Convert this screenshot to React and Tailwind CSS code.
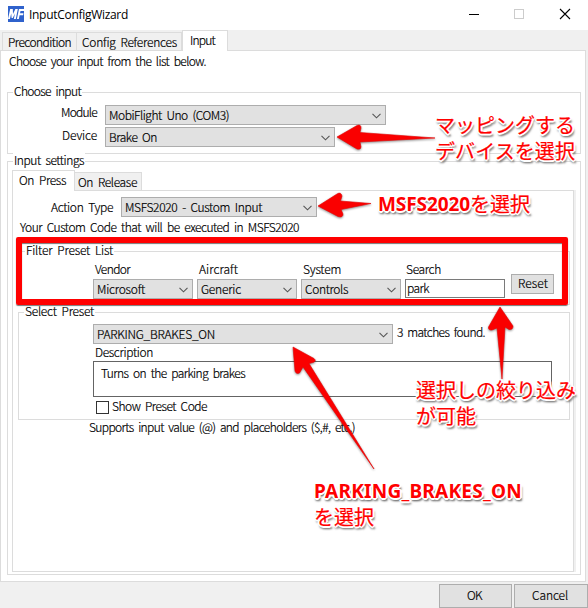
import { useLayoutEffect, useRef } from "react";

// Text set to an exact advance width by spreading the difference over its letters.
function Fit({ w, className = "", children }) {
  const ref = useRef(null);
  useLayoutEffect(() => {
    const el = ref.current;
    el.style.letterSpacing = "0px";
    const natural = el.getBoundingClientRect().width;
    el.style.letterSpacing = (w - natural) / children.length + "px";
  }, [w, children]);
  return (
    <span ref={ref} className={`inline-block shrink-0 whitespace-pre ${className}`}>
      {children}
    </span>
  );
}

function Chevron() {
  return (
    <svg className="ml-auto mr-[4px] mt-[2px] shrink-0" width="9" height="6" viewBox="0 0 9 6" fill="none">
      <path d="M0.5 0.8 4.5 4.8 8.5 0.8" stroke="#555" strokeWidth="1.1" />
    </svg>
  );
}

function Select({ w, className, children }) {
  return (
    <div className={`flex h-5 shrink-0 items-center border border-[#adadad] bg-[#e1e1e1] pl-[3px] ${className}`}>
      <Fit w={w}>{children}</Fit>
      <Chevron />
    </div>
  );
}

function Group({ label, w, inset = "ml-[5px]", className, children }) {
  return (
    <section className={`flex shrink-0 flex-col border border-[#dcdcdc] ${className}`}>
      <h2 className={`-mt-[9px] mb-px h-[14px] w-fit bg-white px-px ${inset}`}>
        <Fit w={w}>{label}</Fit>
      </h2>
      {children}
    </section>
  );
}

function Filter({ label, lw, w, children }) {
  return (
    <div className="flex w-[100px] flex-col">
      <div className="ml-[2px] h-[17px]"><Fit w={lw}>{label}</Fit></div>
      <Select w={w} className="w-[100px]">{children}</Select>
    </div>
  );
}

const note =
  "absolute whitespace-nowrap text-[20px] leading-[26px] text-[#ff0000] font-['Noto_Sans_CJK_JP',sans-serif] font-normal [-webkit-text-stroke:0.2px_#ff0000] [text-shadow:1px_0_0_#fff,-1px_0_0_#fff,0_1px_0_#fff,0_-1px_0_#fff,1px_1px_0_#fff,-1px_-1px_0_#fff,1px_-1px_0_#fff,-1px_1px_0_#fff,2px_0_0_#fff,-2px_0_0_#fff,0_2px_0_#fff,2px_3px_2px_#777,0px_3px_2px_#888]";
const latin = "font-['Noto_Sans','Open_Sans',sans-serif] font-bold text-[19px] [-webkit-text-stroke:0px]";

export default function App() {
  return (
    <div className="relative flex h-[608px] w-[588px] flex-col overflow-hidden bg-[#f0f0f0] font-['Noto_Sans_CJK_JP',sans-serif] text-[12px] font-light leading-[14px] text-black [-webkit-text-stroke:0.2px_#000] [word-spacing:2.5px]">
      <header className="flex h-[30px] shrink-0 items-center bg-white pl-[8px]">
        <svg width="16" height="16" viewBox="0 0 16 16" className="-mt-[2px]">
          <rect width="16" height="16" fill="#2f62cc" />
          <path d="M0 13 2.2 3 4.8 3 5 8 7.4 3 9.8 3 7.8 13 5.9 13 6.9 7.6 4.8 12 3.6 12 3.2 7.6 1.9 13Z" fill="#fff" />
          <path d="M8.9 13 11 3H16V5.1H12.5L12 7.2H15.5L15.1 9.2H11.6L10.8 13Z" fill="#fff" />
        </svg>
        <Fit w={99} className="ml-[5px] font-['Open_Sans',sans-serif] text-[12px] font-normal [-webkit-text-stroke:0px]">InputConfigWizard</Fit>
        <svg className="ml-auto mr-[17px] -mt-[2px]" width="102" height="12" viewBox="0 0 102 12" fill="none">
          <path d="M0 6.5H10" stroke="#000" />
          <rect x="45.5" y="1.5" width="9" height="9" stroke="#ccc" />
          <path d="M91 1 101 11M101 1 91 11" stroke="#000" strokeWidth="1.1" />
        </svg>
      </header>

      <nav className="flex h-5 shrink-0 items-end pl-[2px]">
        <div className="flex h-[18px] w-[75px] items-center border border-b-0 border-[#dcdcdc] pl-[5px]">
          <Fit w={63}>Precondition</Fit>
        </div>
        <div className="flex h-[18px] w-[105px] items-center border border-b-0 border-l-0 border-[#dcdcdc] pl-[5px]">
          <Fit w={95}>Config References</Fit>
        </div>
        <div className="z-10 -mb-px flex h-[21px] w-[46px] items-center border border-b-0 border-[#dcdcdc] bg-white pb-[2px] pl-[7px]">
          <Fit w={25}>Input</Fit>
        </div>
      </nav>

      <main className="flex h-[532px] w-[586px] shrink-0 flex-col border border-[#dcdcdc] bg-white pl-[6px]">
        <p className="ml-[2px] mt-[3px] h-[14px]"><Fit w={197}>Choose your input from the list below.</Fit></p>

        <Group label="Choose input" w={67} className="mt-[24px] h-[62px] w-[574px]">
          <div className="mt-[6px] flex h-[20px]">
            <div className="w-[97px] pl-[53px]"><Fit w={36}>Module</Fit></div>
            <Select w={120} className="w-[281px]">MobiFlight Uno (COM3)</Select>
          </div>
          <div className="mt-[2px] flex h-[20px]">
            <div className="w-[97px] pl-[54px] pt-px"><Fit w={35}>Device</Fit></div>
            <Select w={48} className="w-[230px]">Brake On</Select>
          </div>
        </Group>

        <Group label="Input settings" w={70} className="mt-[7px] h-[414px] w-[574px] pl-[4px]" inset="ml-px">
          <div className="mt-[2px] flex h-5 shrink-0 items-end">
            <div className="z-10 -mb-px flex h-[21px] w-[63px] items-center border border-b-0 border-[#dcdcdc] bg-white pb-[2px] pl-[6px]">
              <Fit w={47}>On Press</Fit>
            </div>
            <div className="flex h-[18px] w-[67px] items-center border border-b-0 border-l-0 border-[#dcdcdc] bg-[#f0f0f0] pl-[3px]">
              <Fit w={59}>On Release</Fit>
            </div>
          </div>
          <div className="flex h-[382px] w-[564px] shrink-0 flex-col border-r-2 border-[#f0f0f0]">
            <div className="flex h-[382px] w-[562px] flex-col border border-[#dcdcdc] pl-[5px]">
              <div className="mt-[6px] flex h-5 shrink-0">
                <div className="w-[103px] pl-[33px] pt-[3px]"><Fit w={62}>Action Type</Fit></div>
                <Select w={137} className="w-[196px]">MSFS2020 - Custom Input</Select>
              </div>
              <p className="ml-[2px] mt-[3px] h-[14px] shrink-0"><Fit w={279}>Your Custom Code that will be executed in MSFS2020</Fit></p>

              <Group label="Filter Preset List" w={87} inset="ml-[6px]" className="mt-[17px] h-[54px] w-[552px]">
                <div className="mt-[4px] flex gap-[4px] pl-[74px]">
                  <Filter label="Vendor" lw={35} w={48}>Microsoft</Filter>
                  <Filter label="Aircraft" lw={39} w={40}>Generic</Filter>
                  <Filter label="System" lw={38} w={43}>Controls</Filter>
                  <div className="w-[100px]">
                    <div className="ml-px h-[17px]"><Fit w={35}>Search</Fit></div>
                    <div className="flex h-[19px] items-center border border-[#7a7a7a] bg-white pb-[2px] pl-px"><Fit w={22}>park</Fit></div>
                  </div>
                  <button className="ml-[2px] mt-[12px] flex h-5 w-[43px] items-center border border-[#adadad] bg-[#e1e1e1] pl-[6px] pb-[3px]">
                    <Fit w={30}>Reset</Fit>
                  </button>
                </div>
              </Group>

              <Group label="Select Preset" w={69} className="mt-[7px] h-[108px] w-[552px]">
                <div className="mt-[5px] flex items-center pl-[74px]">
                  <Select w={118} className="w-[300px]">PARKING_BRAKES_ON</Select>
                  <Fit w={88} className="-mt-[5px] ml-[4px]">3 matches found.</Fit>
                </div>
                <div className="ml-[76px] mt-px h-[16px]"><Fit w={58}>Description</Fit></div>
                <div className="ml-[74px] h-[36px] w-[459px] shrink-0 border border-[#646464] pl-[7px] pt-[4px]">
                  <Fit w={144}>Turns on the parking brakes</Fit>
                </div>
                <div className="ml-[77px] mt-[4px] flex h-[13px] items-center">
                  <div className="h-[13px] w-[13px] border border-[#333] bg-white" />
                  <Fit w={95} className="-mt-[4px] ml-[3px]">Show Preset Code</Fit>
                </div>
              </Group>
              <p className="ml-[71px] h-[14px] shrink-0"><Fit w={266}>Supports input value (@) and placeholders ($,#, etc.)</Fit></p>
            </div>
          </div>
        </Group>
      </main>

      <footer className="flex justify-end gap-[2px] pt-[2px]">
        <button className="flex h-[24px] w-[73px] items-center justify-center border border-[#adadad] bg-[#e1e1e1] pb-[3px] pr-[2px]"><Fit w={15}>OK</Fit></button>
        <button className="flex h-[24px] w-[74px] items-center justify-center border border-[#adadad] bg-[#e1e1e1] pb-[3px] pr-[2px]"><Fit w={36}>Cancel</Fit></button>
      </footer>

      {/* Tutorial annotations drawn over the dialog */}
      <div className="absolute left-[16px] top-[237px] z-20 h-[68px] w-[552px] rounded-[2px] border-[6px] border-[#ff0000] shadow-[0_1px_1px_#777,inset_0_1px_1px_#777]" />
      <svg className="absolute left-0 top-0 z-20 [filter:drop-shadow(0_1px_1px_rgba(0,0,0,.45))]" width="588" height="608" viewBox="0 0 588 608">
        <g fill="#fa0000" stroke="#e80000" strokeWidth="0.6" strokeLinejoin="round">
          <path d="M337 137 357 125.5Q361 124 361 128L360 132.500 435 138 360 142 361 147Q361 150 357 149Z" />
          <path d="M318 206 337 194Q341 191.500 342 196L340.500 201 371 203.500 341 209.500 343 214Q343 218 338 216.500Z" />
          <path d="M500 307 513 326Q513 330 509 329.500L505 327 502 379 497 328 492 330Q488 330.500 488.500 327Z" />
          <path d="M293 347 314 358.500Q317 361 313 362.500L309 363.500 374 469 303 367 299.500 373Q296 374.500 295 371Z" />
        </g>
      </svg>
      <div className={`${note} left-[435px] top-[112px] z-30`}><Fit w={140}>マッピングする</Fit><br /><Fit w={140}>デバイスを選択</Fit></div>
      <div className={`${note} left-[378px] top-[191px] z-30 flex`}><Fit w={92} className={latin}>MSFS2020</Fit><Fit w={60}>を選択</Fit></div>
      <div className={`${note} left-[416px] top-[377px] z-30`}><Fit w={160}>選択しの絞り込み</Fit><br /><Fit w={60}>が可能</Fit></div>
      <div className={`${note} left-[314px] top-[477px] z-30`}><Fit w={208} className={latin}>PARKING_BRAKES_ON</Fit><br /><Fit w={60}>を選択</Fit></div>
    </div>
  );
}
